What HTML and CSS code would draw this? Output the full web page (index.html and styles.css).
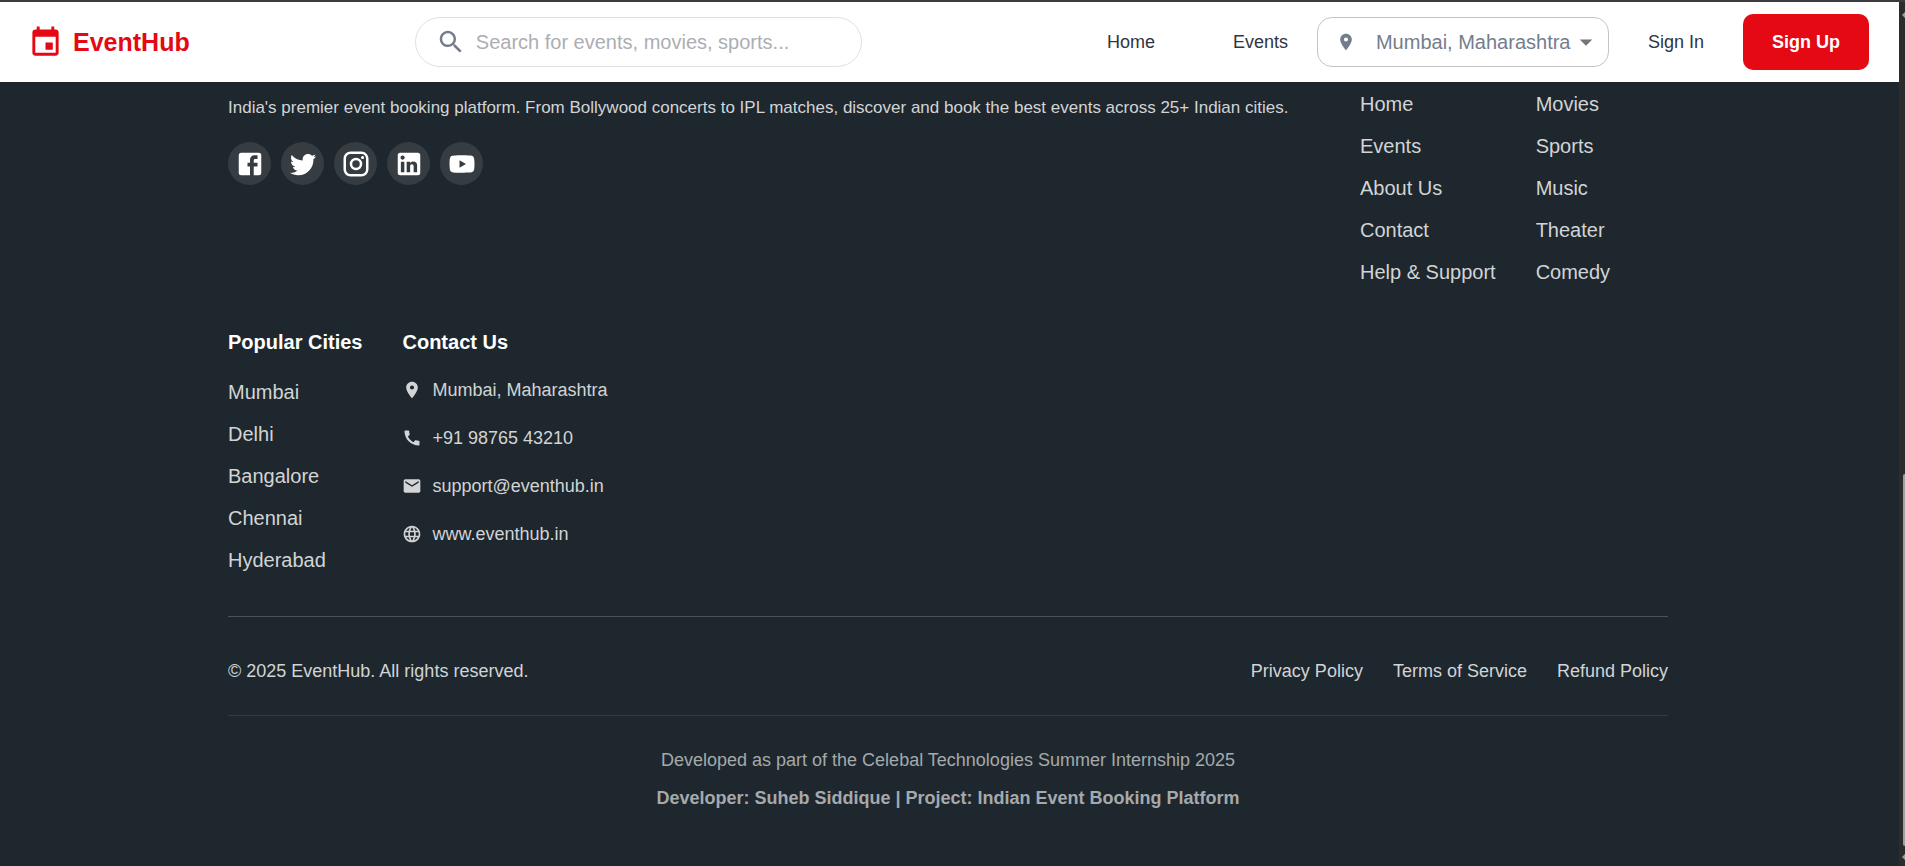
FILE: index.html
```html
<!DOCTYPE html>
<html lang="en">
<head>
<meta charset="utf-8">
<meta name="viewport" content="width=device-width, initial-scale=1">
<title>EventHub</title>
<link rel="stylesheet" href="styles.css">
</head>
<body>
<div class="page">
  <header class="header">
    <a class="logo" href="#">
      <svg class="logo-icon" viewBox="0 0 24 24" aria-hidden="true"><path d="M17 12h-5v5h5v-5zM16 1v2H8V1H6v2H5c-1.11 0-1.99.9-1.99 2L3 19c0 1.1.89 2 2 2h14c1.1 0 2-.9 2-2V5c0-1.1-.9-2-2-2h-1V1h-2zm3 18H5V8h14v11z"/></svg>
      <span>EventHub</span>
    </a>
    <label class="search">
      <svg class="icon-lg" viewBox="0 0 24 24" aria-hidden="true"><path d="M15.5 14h-.79l-.28-.27C15.41 12.59 16 11.11 16 9.5 16 5.91 13.09 3 9.5 3S3 5.91 3 9.5 5.91 16 9.5 16c1.61 0 3.09-.59 4.23-1.57l.27.28v.79l5 4.99L20.49 19l-4.99-5zm-6 0C7.01 14 5 11.99 5 9.5S7.01 5 9.5 5 14 7.01 14 9.5 11.99 14 9.5 14z"/></svg>
      <input class="search-input" type="text" aria-label="Search" placeholder="Search for events, movies, sports...">
    </label>
    <nav class="nav">
      <a class="nav-link nav-wide" href="#">Home</a>
      <a class="nav-link nav-last" href="#">Events</a>
      <label class="location">
        <svg class="icon-sm" viewBox="0 0 24 24" aria-hidden="true"><path d="M12 2C8.13 2 5 5.13 5 9c0 5.25 7 13 7 13s7-7.75 7-13c0-3.87-3.13-7-7-7zm0 9.500a2.500 2.500 0 0 1 0-5 2.500 2.500 0 0 1 0 5z"/></svg>
        <select class="location-select" aria-label="City"><option>Mumbai, Maharashtra</option></select>
        <svg class="icon-lg location-arrow" viewBox="0 0 24 24" aria-hidden="true"><path d="M7 10l5 5 5-5z"/></svg>
      </label>
      <a class="nav-link sign-in" href="#">Sign In</a>
      <button class="sign-up" type="button">Sign Up</button>
    </nav>
  </header>

  <footer class="footer">
    <div class="container">
      <div class="columns">
        <section class="brand">
          <p class="tagline">India's premier event booking platform. From Bollywood concerts to IPL matches, discover and book the best events across 25+ Indian cities.</p>
          <div class="social">
            <a class="social-link" href="#" aria-label="Facebook"><svg class="icon-lg" viewBox="0 0 24 24"><path d="M5 3h14a2 2 0 0 1 2 2v14a2 2 0 0 1-2 2H5a2 2 0 0 1-2-2V5a2 2 0 0 1 2-2m13 2h-2.500A3.500 3.500 0 0 0 12 8.500V11h-2v3h2v7h3v-7h3v-3h-3V9a1 1 0 0 1 1-1h2V5z"/></svg></a>
            <a class="social-link" href="#" aria-label="Twitter"><svg class="icon-lg" viewBox="0 0 24 24"><path d="M22.460 6c-.77.35-1.600.58-2.460.69.88-.53 1.560-1.370 1.880-2.380-.83.5-1.750.85-2.720 1.050C18.370 4.500 17.260 4 16 4c-2.350 0-4.270 1.920-4.270 4.290 0 .34.04.67.11.98C8.280 9.090 5.110 7.380 3 4.790c-.37.63-.58 1.370-.58 2.150 0 1.490.75 2.810 1.910 3.560-.71 0-1.370-.2-1.950-.5v.03c0 2.080 1.480 3.820 3.440 4.210a4.220 4.220 0 0 1-1.930.07 4.280 4.280 0 0 0 4 2.980 8.521 8.521 0 0 1-5.330 1.840c-.34 0-.68-.02-1.020-.06C3.440 20.290 5.700 21 8.120 21 16 21 20.330 14.460 20.330 8.790c0-.19 0-.37-.01-.56.84-.6 1.560-1.360 2.140-2.230z"/></svg></a>
            <a class="social-link" href="#" aria-label="Instagram"><svg class="icon-lg" viewBox="0 0 24 24"><path d="M7.800 2h8.400C19.400 2 22 4.600 22 7.800v8.400a5.800 5.800 0 0 1-5.800 5.800H7.800C4.600 22 2 19.400 2 16.200V7.800A5.800 5.800 0 0 1 7.800 2m-.2 2A3.600 3.600 0 0 0 4 7.600v8.800C4 18.390 5.610 20 7.600 20h8.800a3.600 3.600 0 0 0 3.600-3.600V7.600C20 5.610 18.390 4 16.400 4H7.600m9.650 1.500a1.250 1.250 0 0 1 0 2.500 1.250 1.250 0 0 1 0-2.500M12 7a5 5 0 0 1 0 10 5 5 0 0 1 0-10m0 2a3 3 0 0 0 0 6 3 3 0 0 0 0-6z"/></svg></a>
            <a class="social-link" href="#" aria-label="LinkedIn"><svg class="icon-lg" viewBox="0 0 24 24"><path d="M19 3a2 2 0 0 1 2 2v14a2 2 0 0 1-2 2H5a2 2 0 0 1-2-2V5a2 2 0 0 1 2-2h14m-.5 15.500v-5.300a3.260 3.260 0 0 0-3.260-3.260c-.85 0-1.840.52-2.320 1.300v-1.110h-2.790v8.370h2.790v-4.930c0-.77.62-1.400 1.390-1.400a1.400 1.400 0 0 1 1.400 1.400v4.930h2.790M6.880 8.560a1.680 1.680 0 0 0 1.680-1.680c0-.93-.75-1.690-1.680-1.690a1.690 1.690 0 0 0-1.690 1.690c0 .93.76 1.680 1.690 1.680m1.390 9.940v-8.370H5.500v8.370h2.770z"/></svg></a>
            <a class="social-link" href="#" aria-label="YouTube"><svg class="icon-lg" viewBox="0 0 24 24"><path d="M10 15l5.190-3L10 9v6m11.560-7.830c.13.470.22 1.100.28 1.900.07.8.1 1.490.1 2.090L22 12c0 2.190-.16 3.800-.44 4.830-.25.9-.83 1.480-1.730 1.730-.47.130-1.330.22-2.650.28-1.300.07-2.490.1-3.590.1L12 19c-4.190 0-6.800-.16-7.830-.44-.9-.25-1.480-.83-1.730-1.730-.13-.47-.22-1.100-.28-1.900-.07-.8-.1-1.490-.1-2.090L2 12c0-2.190.16-3.800.44-4.830.25-.9.83-1.480 1.730-1.730.47-.13 1.330-.22 2.650-.28 1.300-.07 2.490-.1 3.590-.1L12 5c4.190 0 6.800.16 7.830.44.9.25 1.480.83 1.730 1.730z"/></svg></a>
          </div>
        </section>
        <ul class="links">
          <li><a href="#">Home</a></li>
          <li><a href="#">Events</a></li>
          <li><a href="#">About Us</a></li>
          <li><a href="#">Contact</a></li>
          <li><a href="#">Help &amp; Support</a></li>
        </ul>
        <ul class="links">
          <li><a href="#">Movies</a></li>
          <li><a href="#">Sports</a></li>
          <li><a href="#">Music</a></li>
          <li><a href="#">Theater</a></li>
          <li><a href="#">Comedy</a></li>
        </ul>
        <section class="group">
          <h2 class="heading">Popular Cities</h2>
          <ul class="links">
            <li><a href="#">Mumbai</a></li>
            <li><a href="#">Delhi</a></li>
            <li><a href="#">Bangalore</a></li>
            <li><a href="#">Chennai</a></li>
            <li><a href="#">Hyderabad</a></li>
          </ul>
        </section>
        <section class="group">
          <h2 class="heading">Contact Us</h2>
          <ul class="contact">
            <li class="contact-row"><svg class="icon-sm" viewBox="0 0 24 24" aria-hidden="true"><path d="M12 2C8.130 2 5 5.130 5 9c0 5.250 7 13 7 13s7-7.750 7-13c0-3.870-3.130-7-7-7zm0 9.500a2.500 2.500 0 0 1 0-5 2.500 2.500 0 0 1 0 5z"/></svg>Mumbai, Maharashtra</li>
            <li class="contact-row"><svg class="icon-sm" viewBox="0 0 24 24" aria-hidden="true"><path d="M20.010 15.380c-1.230 0-2.420-.2-3.530-.56-.35-.12-.74-.03-1.010.24l-1.570 1.970c-2.830-1.350-5.480-3.900-6.890-6.830l1.950-1.660c.27-.28.35-.67.24-1.020-.37-1.110-.56-2.300-.56-3.530 0-.54-.45-.99-.99-.99H4.190C3.650 3 3 3.240 3 3.990 3 13.280 10.730 21 20.010 21c.71 0 .99-.63.99-1.180v-3.450c0-.54-.45-.99-.99-.99z"/></svg>+91 98765 43210</li>
            <li class="contact-row"><svg class="icon-sm" viewBox="0 0 24 24" aria-hidden="true"><path d="M20 4H4c-1.100 0-1.990.9-1.990 2L2 18c0 1.100.9 2 2 2h16c1.100 0 2-.9 2-2V6c0-1.100-.9-2-2-2zm0 4l-8 5-8-5V6l8 5 8-5v2z"/></svg>support@eventhub.in</li>
            <li class="contact-row"><svg class="icon-sm" viewBox="0 0 24 24" aria-hidden="true"><path d="M11.990 2C6.470 2 2 6.480 2 12s4.470 10 9.990 10C17.520 22 22 17.520 22 12S17.520 2 11.990 2zm6.930 6h-2.950c-.32-1.250-.78-2.450-1.380-3.560 1.840.63 3.370 1.910 4.330 3.560zM12 4.040c.83 1.200 1.480 2.530 1.910 3.960h-3.820c.43-1.430 1.080-2.760 1.910-3.960zM4.260 14C4.100 13.360 4 12.690 4 12s.1-1.360.26-2h3.380c-.08.66-.14 1.320-.14 2s.06 1.340.14 2H4.260zm.82 2h2.950c.32 1.250.78 2.450 1.380 3.560-1.840-.63-3.370-1.900-4.330-3.560zm2.950-8H5.080c.96-1.660 2.490-2.930 4.330-3.560C8.810 5.550 8.350 6.750 8.030 8zM12 19.960c-.83-1.200-1.480-2.530-1.910-3.960h3.820c-.43 1.430-1.080 2.760-1.910 3.960zM14.340 14H9.660c-.09-.66-.16-1.320-.16-2s.07-1.350.16-2h4.680c.09.65.16 1.320.16 2s-.07 1.340-.16 2zm.25 5.560c.6-1.110 1.060-2.310 1.380-3.560h2.950c-.96 1.650-2.490 2.930-4.330 3.560zM16.360 14c.08-.66.14-1.320.14-2s-.06-1.340-.14-2h3.380c.16.64.26 1.310.26 2s-.1 1.360-.26 2h-3.380z"/></svg>www.eventhub.in</li>
          </ul>
        </section>
      </div>
      <div class="legal">
        <p>© 2025 EventHub. All rights reserved.</p>
        <div class="legal-links">
          <a href="#">Privacy Policy</a>
          <a href="#">Terms of Service</a>
          <a href="#">Refund Policy</a>
        </div>
      </div>
      <div class="credits">
        <p>Developed as part of the Celebal Technologies Summer Internship 2025</p>
        <p class="credits-strong">Developer: Suheb Siddique | Project: Indian Event Booking Platform</p>
      </div>
    </div>
  </footer>
</div>
<div class="scrollbar" aria-hidden="true">
  <span class="scroll-up"></span>
  <span class="scroll-thumb"></span>
  <span class="scroll-down"></span>
</div>
</body>
</html>
```
FILE: styles.css
```css
* {
  box-sizing: border-box;
}

body {
  margin: 0;
  min-height: 100vh;
  display: flex;
  border-top: 2px solid #3c3c3c;
  background: #1e272e;
  color: #d2d4d5;
  font-family: "Liberation Sans", Arial, sans-serif;
  font-size: 18px;
  line-height: 28px;
}

p, h2, ul {
  margin: 0;
  padding: 0;
}

ul {
  list-style: none;
}

a {
  color: inherit;
  text-decoration: none;
}

svg {
  display: block;
  flex: none;
  fill: currentColor;
}

.icon-lg {
  width: 30px;
  height: 30px;
}

.icon-sm {
  width: 20px;
  height: 20px;
}

.page {
  flex: 1;
  min-width: 0;
  display: flex;
  flex-direction: column;
}

.header {
  display: flex;
  align-items: center;
  justify-content: space-between;
  height: 80px;
  padding: 0 30px 0 28px;
  background: #fff;
  color: #2f3542;
}

.logo {
  display: flex;
  align-items: center;
  gap: 10px;
  color: #e50914;
  font-size: 25px;
  font-weight: 700;
}

.logo-icon {
  width: 35px;
  height: 35px;
}

.search {
  display: flex;
  align-items: center;
  gap: 10px;
  width: 447px;
  height: 50px;
  padding: 0 20px;
  border: 1px solid #e0e0e0;
  border-radius: 25px;
  color: #747d8c;
}

.search-input {
  flex: 1;
  min-width: 0;
  padding: 0;
  border: 0;
  outline: 0;
  background: none;
  font: inherit;
  font-size: 20px;
  color: #2f3542;
}

.search-input::placeholder {
  color: #acaeb3;
}

.nav {
  display: flex;
  align-items: center;
  padding-left: 20px;
}

.nav-wide {
  margin-right: 78px;
}

.nav-last {
  margin-right: 29px;
}

.location {
  display: flex;
  align-items: center;
  height: 50px;
  padding: 0 7px 0 18px;
  border: 1px solid #c4c4c4;
  border-radius: 15px;
  color: #747d8c;
}

.location-select {
  appearance: none;
  margin-left: 20px;
  padding: 0;
  border: 0;
  background: none;
  font: inherit;
  font-size: 20px;
  color: inherit;
}

.location-arrow {
  color: #757575;
}

.sign-in {
  margin: 0 39px;
}

.sign-up {
  height: 56px;
  padding: 0 29px;
  border: 0;
  border-radius: 10px;
  background: #e50914;
  color: #fff;
  font: inherit;
  font-weight: 700;
}

.footer {
  flex: 1;
  padding: 6px 3px 0 0;
}

.container {
  max-width: 1440px;
  margin: 0 auto;
}

.columns {
  display: flex;
  flex-wrap: wrap;
  gap: 40px;
  padding-bottom: 40px;
}

.brand {
  flex: 0 1 1092px;
  padding-top: 5px;
}

.tagline {
  font-size: 17px;
  line-height: 30px;
}

.social {
  display: flex;
  gap: 10px;
  margin-top: 19px;
}

.social-link {
  display: flex;
  align-items: center;
  justify-content: center;
  width: 43px;
  height: 43px;
  border-radius: 50%;
  background: #353d43;
  color: #fff;
}

.links {
  display: flex;
  flex-direction: column;
  gap: 10px;
  font-size: 20px;
  line-height: 32px;
}

.group {
  display: flex;
  flex-direction: column;
  gap: 20px;
}

.heading {
  color: #fff;
  font-size: 20px;
  line-height: 28px;
}

.contact {
  display: flex;
  flex-direction: column;
  gap: 20px;
}

.contact-row {
  display: flex;
  align-items: center;
  gap: 10px;
}

.legal {
  display: flex;
  justify-content: space-between;
  padding: 40px 0 30px;
  border-top: 1px solid #4b5258;
}

.legal-links {
  display: flex;
  gap: 30px;
}

.credits {
  display: flex;
  flex-direction: column;
  gap: 10px;
  padding: 30px 0;
  border-top: 1px solid #353d43;
  color: #a5a9ab;
  text-align: center;
}

.credits-strong {
  font-weight: 700;
}

.scrollbar {
  display: flex;
  flex-direction: column;
  align-items: flex-end;
  width: 6px;
  background: #2c2c2c;
}

.scroll-up,
.scroll-down {
  border: 3px solid transparent;
  border-left-width: 0;
  border-right: 3px solid #9f9f9f;
}

.scroll-up {
  margin-top: 10px;
}

.scroll-thumb {
  width: 2px;
  height: 43%;
  margin-top: auto;
  border-radius: 2px 0 0 2px;
  background: #9f9f9f;
}

.scroll-down {
  margin: 8px 0 6px;
}
```
